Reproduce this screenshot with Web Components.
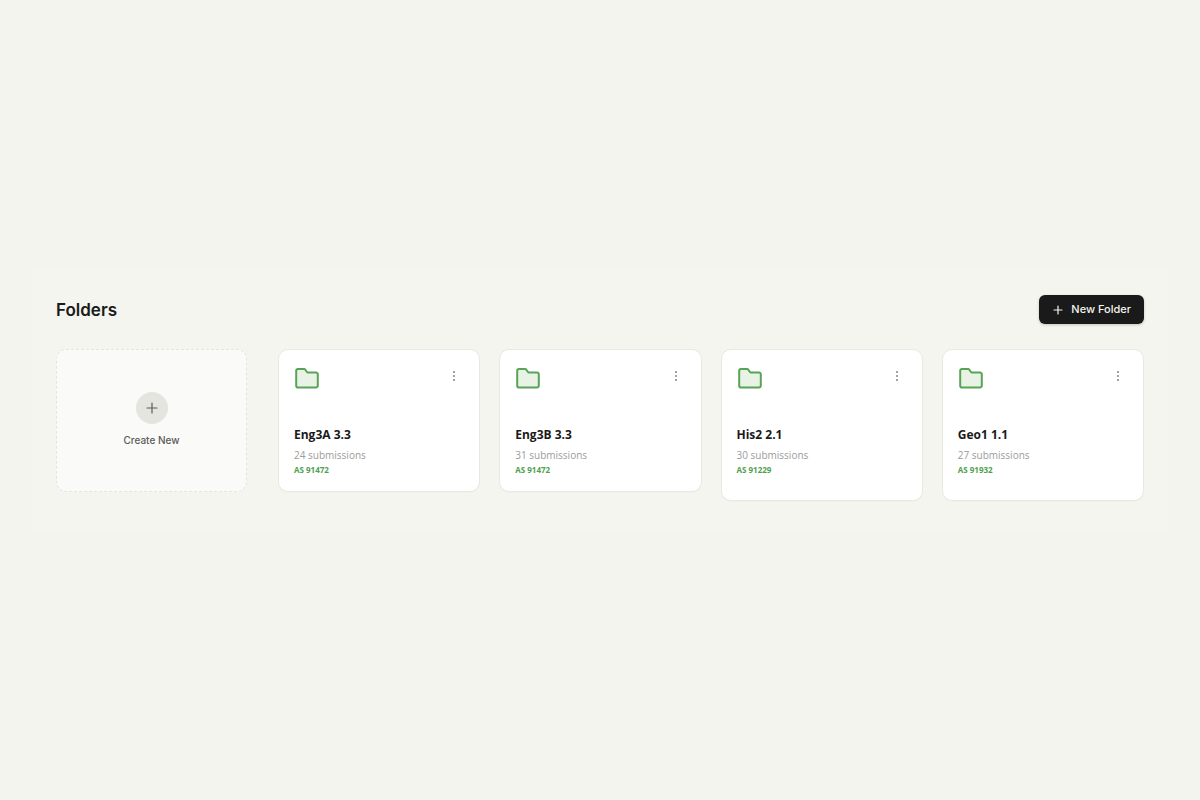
<!DOCTYPE html>
<html lang="en">
<head>
<meta charset="utf-8">
<meta name="viewport" content="width=device-width, initial-scale=1">
<title>Folders</title>
<style>
  body {
    margin: 0;
    min-height: 100vh;
    display: flex;
    flex-direction: column;
    justify-content: center;
    background: #f3f4ed;
    color: #1a1a1a;
    font-family: "Inter", sans-serif;
  }
</style>
</head>
<body>
<folders-panel>
  <new-folder-button slot="action">New Folder</new-folder-button>
  <create-card slot="create">Create New</create-card>
  <folder-card count="24" standard="AS 91472">Eng3A 3.3</folder-card>
  <folder-card count="31" standard="AS 91472">Eng3B 3.3</folder-card>
  <folder-card count="30" standard="AS 91229" tall>His2 2.1</folder-card>
  <folder-card count="27" standard="AS 91932" tall>Geo1 1.1</folder-card>
</folders-panel>
<script>
const define = (name, markup, setup) => customElements.define(name, class extends HTMLElement {
  constructor() {
    super();
    this.attachShadow({ mode: 'open' });
  }
  connectedCallback() {
    this.shadowRoot.innerHTML = markup;
    if (setup) setup(this);
  }
});

define('folders-panel', `
  <style>
    :host { display: block; margin: 0 32px; padding: 25px 24px 29px; background: #f4f5ee; }
    header { display: flex; align-items: center; justify-content: space-between; margin-bottom: 25px; }
    h2 { margin: 0; font-size: 17px; line-height: 24px; font-weight: 600; }
    .row { display: flex; gap: 31px; align-items: flex-start; }
    .create { flex: 191 1 0; min-width: 0; }
    .cards { flex: 866 1 0; min-width: 0; display: grid; grid-template-columns: repeat(4, minmax(0, 1fr)); gap: 19px; align-items: start; }
  </style>
  <header><h2>Folders</h2><slot name="action"></slot></header>
  <div class="row">
    <div class="create"><slot name="create"></slot></div>
    <div class="cards"><slot></slot></div>
  </div>`);

define('new-folder-button', `
  <style>
    :host { display: block; }
    button { display: flex; align-items: center; gap: 7px; margin: 0; padding: 6px 13px; border: 0; border-radius: 6px;
      background: #1a1a1a; color: #f4f5ee; font: 500 11px/17px "Inter", sans-serif; box-shadow: 0 1px 3px rgba(0,0,0,.2); }
    svg { display: block; }
  </style>
  <button type="button">
    <svg width="12" height="12" viewBox="0 0 12 12" fill="none" stroke="currentColor" stroke-width="1.2" stroke-linecap="round" aria-hidden="true"><path d="M6 2v8M2 6h8"/></svg>
    <span><slot></slot></span>
  </button>`);

define('create-card', `
  <style>
    :host { display: block; }
    button { box-sizing: border-box; width: 100%; min-height: 143px; margin: 0; padding: 0 0 1px; display: flex; flex-direction: column;
      align-items: center; justify-content: center; gap: 8px; border: 1px dashed #e3e4dd; border-radius: 10px;
      background: #fafaf8; color: #5c5c5a; font: 500 10px/16px "Inter", sans-serif; }
    .disc { width: 32px; height: 32px; border-radius: 50%; display: grid; place-items: center; background: #e4e5de; }
    svg { display: block; }
  </style>
  <button type="button">
    <span class="disc"><svg width="14" height="14" viewBox="0 0 14 14" fill="none" stroke="currentColor" stroke-width="1.2" stroke-linecap="round" aria-hidden="true"><path d="M7 2v10M2 7h10"/></svg></span>
    <span><slot></slot></span>
  </button>`);

define('folder-card', `
  <style>
    :host { display: block; box-sizing: border-box; min-height: 143px; padding: 16px 15px 8px; border: 1px solid #e8e9e2; border-radius: 10px; background: #fff; box-shadow: 0 1px 1px rgba(0,0,0,.02); font-family: "Open Sans", sans-serif; }
    :host([tall]) { min-height: 152px; }
    .top { display: flex; justify-content: space-between; align-items: flex-start; margin-bottom: 34px; }
    svg { display: block; }
    button { margin: 0; padding: 3px; border: 0; background: none; color: #8c8c8c; }
    h3 { margin: 0 0 3px; font-size: 12px; line-height: 18px; font-weight: 700; }
    p { margin: 0; }
    .count { font-size: 10px; line-height: 16px; color: #9c9c9c; }
    .standard { font-size: 8px; line-height: 14px; font-weight: 700; color: #50a050; }
  </style>
  <div class="top">
    <svg width="26" height="26" viewBox="0 0 26 26" fill="#e8f3e6" stroke="#58a456" stroke-width="2" stroke-linejoin="round" aria-hidden="true"><path d="M22 21.500a1.800 1.800 0 0 0 1.800-1.800V8.300A1.800 1.800 0 0 0 22 6.500H13.400L11.400 3.800A1.800 1.800 0 0 0 10 3H4A1.800 1.800 0 0 0 2.200 4.800v14.900A1.800 1.800 0 0 0 4 21.500Z"/></svg>
    <button type="button" aria-label="Folder options"><svg width="14" height="14" viewBox="0 0 14 14" fill="currentColor" aria-hidden="true"><circle cx="7" cy="3" r="1.1"/><circle cx="7" cy="7" r="1.1"/><circle cx="7" cy="11" r="1.1"/></svg></button>
  </div>
  <h3><slot></slot></h3>
  <p class="count"></p>
  <p class="standard"></p>`, el => {
    el.shadowRoot.querySelector('.count').textContent = el.getAttribute('count') + ' submissions';
    el.shadowRoot.querySelector('.standard').textContent = el.getAttribute('standard');
  });
</script>
</body>
</html>
